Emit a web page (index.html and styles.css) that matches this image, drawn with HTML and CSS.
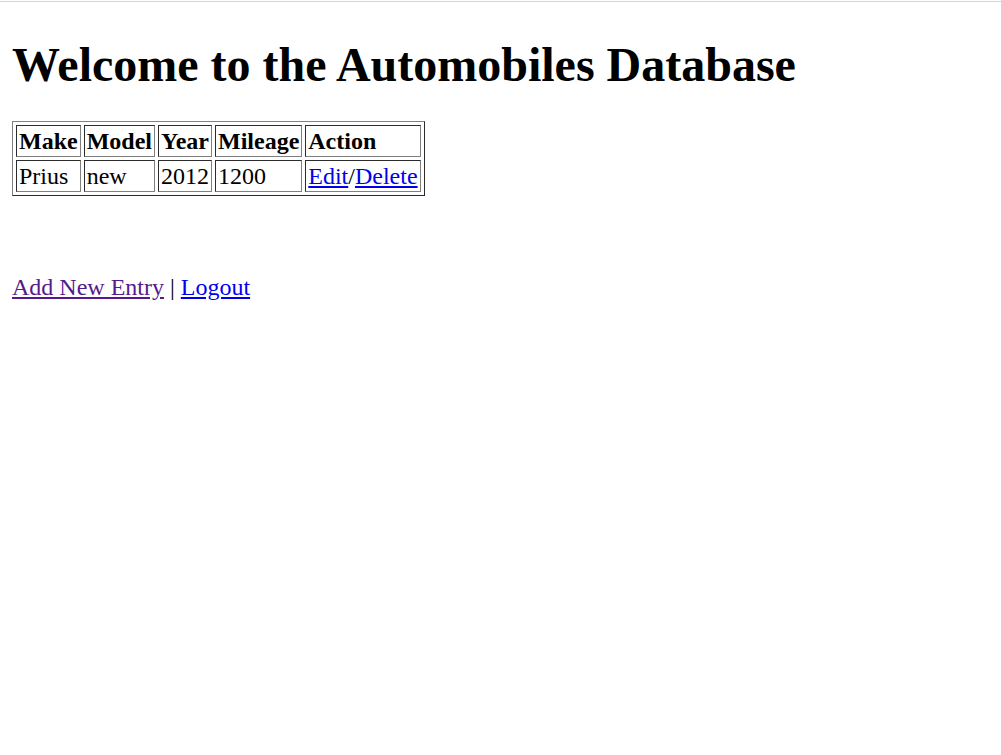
FILE: index.html
```html
<!DOCTYPE html>
<html>
<head>
<meta charset="utf-8">
<title>Automobiles Database</title>
<link rel="stylesheet" href="styles.css">
</head>
<body>
<h1 class="title">Welcome to the Automobiles Database</h1>
<table class="autos">
<tr><th>Make</th><th>Model</th><th>Year</th><th>Mileage</th><th>Action</th></tr>
<tr><td>Prius</td><td>new</td><td>2012</td><td>1200</td><td><a href="#edit">Edit</a>/<a href="#delete">Delete</a></td></tr>
</table>
<p class="links"><a class="visited" href="#add">Add New Entry</a> | <a href="#logout">Logout</a></p>
</body>
</html>
```
FILE: styles.css
```css
html::before {
  content: "";
  position: absolute;
  top: 1px;
  left: 0;
  right: 0;
  height: 1px;
  background: #d6d6d6;
}
body {
  margin: 12px;
  font-family: "Liberation Serif", "Times New Roman", serif;
  font-size: 24px;
  color: #000;
  background: #fff;
}
.title {
  font-size: 48px;
  margin: 25px 0 29px;
  line-height: 55px;
}
.autos {
  border: 1px solid #808080;
  border-style: outset;
  border-spacing: 3px;
  border-collapse: separate;
}
.autos th, .autos td {
  border: 1px solid #808080;
  border-style: inset;
  padding: 1px 2px;
  text-align: left;
  line-height: 28px;
}
.autos .act {
  padding-right: 3px;
}
.links {
  margin: 78px 0 0;
}
a {
  color: #0000ee;
}
a.visited {
  color: #551a8b;
}
```
